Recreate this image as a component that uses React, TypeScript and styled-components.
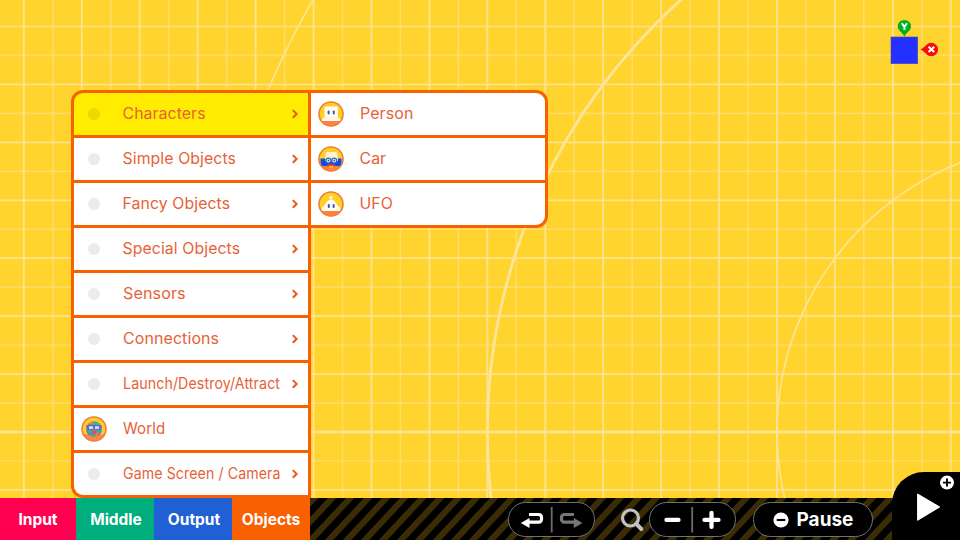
import React from "react";
import styled, { createGlobalStyle } from "styled-components";

const GlobalStyle = createGlobalStyle`
  * { box-sizing: border-box; }
  body { margin: 0; background: #ffd42e; }
`;

const ORANGE = "#f86000";

const Screen = styled.main`
  position: relative;
  width: 960px;
  height: 540px;
  overflow: hidden;
  display: flex;
  flex-direction: column;
  background: #ffd42e;
  font-family: Inter, "Liberation Sans", sans-serif;
`;

const Backdrop = styled.svg`
  position: absolute;
  inset: 0;
`;

const Stage = styled.section`
  position: relative;
  height: 498px;
  flex: none;
  display: flex;
  align-items: flex-start;
  padding: 90px 0 0 71px;
`;

const MenuColumn = styled.ul<{ $sub?: boolean }>`
  list-style: none;
  margin: 0;
  padding: ${(p) => (p.$sub ? "3px 3px 3px 0" : "3px")};
  width: ${(p) => (p.$sub ? 237 : 240)}px;
  display: flex;
  flex-direction: column;
  gap: 3px;
  background: ${ORANGE};
  border-radius: ${(p) => (p.$sub ? "0 12px 12px 0" : "12px 0 0 12px")};
`;

const MenuRow = styled.li<{ $active?: boolean; $sub?: boolean }>`
  height: 42px;
  display: grid;
  grid-template-columns: ${(p) => (p.$sub ? "39px minmax(0, 1fr)" : "39px minmax(0, 1fr) 26px")};
  align-items: center;
  background: ${(p) => (p.$active ? "#ffec00" : "#fff")};
  &:first-child { border-radius: ${(p) => (p.$sub ? "0 9px 0 0" : "9px 0 0 0")}; }
  &:last-child { border-radius: ${(p) => (p.$sub ? "0 0 9px 0" : "0 0 0 9px")}; }
`;

const IconSlot = styled.span`
  display: flex;
  justify-content: center;
`;

const Dot = styled.i<{ $active?: boolean }>`
  width: 12px;
  height: 12px;
  border-radius: 50%;
  background: ${(p) => (p.$active ? "#ebd900" : "#ebebeb")};
`;

const Label = styled.span<{ $squeeze?: number }>`
  margin-left: 9.5px;
  font-size: 15.8px;
  font-weight: 400;
  line-height: 20px;
  white-space: nowrap;
  color: #e66238;
  letter-spacing: 0.1px;
  transform: scaleX(${(p) => p.$squeeze ?? 1});
  transform-origin: left;
`;

const ChevronMark = styled.svg`
  margin-right: 1px;
`;

const Bar = styled.footer`
  position: relative;
  height: 42px;
  display: flex;
  background: #000;
`;

const Stripes = styled.svg`
  position: absolute;
  inset: 0 0 0 310px;
`;

const Tab = styled.button<{ $color: string; $w: number; $shift: number }>`
  flex: none;
  position: relative;
  width: ${(p) => p.$w}px;
  border: 0;
  padding: 0 0 0 ${(p) => p.$shift}px;
  background: ${(p) => p.$color};
  color: #fff;
  font: 700 15.5px/41px Inter, "Liberation Sans", sans-serif;
  text-align: center;
`;

const Controls = styled.div`
  position: relative;
  flex: 1;
  display: flex;
  align-items: flex-start;
  padding: 4px 0 0 198px;
`;

const Pill = styled.div<{ $w: number; $gap?: number }>`
  flex: none;
  width: ${(p) => p.$w}px;
  height: 35px;
  margin-left: ${(p) => p.$gap ?? 0}px;
  border: 1.5px solid #727272;
  border-radius: 18px;
  background: #000;
  display: flex;
  align-items: center;
  justify-content: center;
`;

const PauseLabel = styled.span`
  margin-left: 8px;
  color: #fff;
  font-size: 19px;
  font-weight: 700;
  line-height: 24px;
`;

const Lens = styled.svg`
  flex: none;
  margin: 3px 0 0 25px;
`;

const PlayCorner = styled.div`
  position: absolute;
  right: 0;
  bottom: 0;
  width: 68px;
  height: 68px;
  border-top-left-radius: 32px;
  background: #000;
`;

const AxisCube = styled.svg`
  position: absolute;
  left: 885px;
  top: 15px;
`;

const CX = 1066.6;
const CELL = 57.93;

function Grid() {
  const lines: React.ReactNode[] = [];
  for (let i = -1; i < 34; i++) {
    const major = i % 2 === 0;
    const x = 23.9 + (i * CELL) / 2;
    lines.push(
      <line key={`v${i}`} x1={x} x2={x} y1={0} y2={498} strokeWidth={major ? 1.9 : 1.6} opacity={major ? 0.85 : 0.55} />,
    );
  }
  for (let i = -1; i < 17; i++) {
    const major = i % 2 === 0;
    const y = 26.5 + (i * CELL) / 2;
    lines.push(
      <line
        key={`h${i}`}
        x1={0}
        x2={960}
        y1={y}
        y2={y}
        strokeWidth={i === 14 ? 3 : 1.7}
        opacity={major ? 0.85 : 0.5}
      />,
    );
  }
  return (
    <Backdrop width="960" height="540" stroke="#ffe49c" fill="none">
      {lines}
      <circle cx={CX} cy={432} r={289.6} strokeWidth={1.8} opacity={0.9} />
      <circle cx={CX} cy={432} r={579.2} strokeWidth={2.8} />
      <circle cx={CX} cy={432} r={868.8} strokeWidth={1.7} opacity={0.9} />
    </Backdrop>
  );
}

const Chevron = () => (
  <ChevronMark width="8" height="10" viewBox="0 0 8 10">
    <path d="M1.8 1.1 5.6 4.9 1.8 8.7" fill="none" stroke="#e8561a" strokeWidth="2" />
  </ChevronMark>
);

type Face = "person" | "car" | "ufo" | "world";

function Badge({ face }: { face: Face }) {
  return (
    <svg width="26" height="26" viewBox="0 0 26 26">
      <defs>
        <clipPath id={`clip-${face}`}>
          <circle cx="13" cy="13" r="11.8" />
        </clipPath>
      </defs>
      <circle cx="13" cy="13" r="12.3" fill="#ffcf24" />
      <g clipPath={`url(#clip-${face})`}>
        {face !== "world" && <rect y="20" width="26" height="6" fill="#ff8040" />}
        {face === "person" && (
          <>
            <path d="M7.3 5.5h11.7q.8 0 .8.8V17h1.2q1.5 0 1.5 1.5V20H4v-1.5Q4 17 5.5 17H6.5V6.3Q6.5 5.5 7.3 5.5Z" fill="#fffdf2" />
            <path d="M6.5 16.8H20" stroke="#ffe9ba" strokeWidth=".7" />
            <rect x="9.6" y="9.5" width="2" height="4" rx="1" fill="#4050cc" />
            <rect x="14.8" y="9.5" width="2" height="4" rx="1" fill="#4050cc" />
          </>
        )}
        {face === "car" && (
          <>
            <path d="M2.5 12.5h4l2 1h9l2-1h4v7.5H2.5Z" fill="#0d4be2" />
            <path d="M9.3 6h8.5q1.3 0 1.5 1.3l.7 7.7H7L7.8 7.3Q8 6 9.3 6Z" fill="#fff4cf" />
            <circle cx="10.4" cy="14.6" r="2.5" fill="#bfe7f5" stroke="#3d64bd" strokeWidth="1.1" />
            <circle cx="16.2" cy="14.6" r="2.5" fill="#bfe7f5" stroke="#3d64bd" strokeWidth="1.1" />
            <circle cx="10.4" cy="14.6" r=".8" fill="#2848a8" />
            <circle cx="16.2" cy="14.6" r=".8" fill="#2848a8" />
            <path d="M8.5 20.5q0-2.3 4.7-2.3t4.7 2.3Z" fill="#ff3b30" />
            <rect x="11" y="20" width="4.5" height="1.8" rx=".9" fill="#ffc400" />
          </>
        )}
        {face === "ufo" && (
          <>
            <circle cx="13" cy="6.5" r="1.7" fill="#fff7d8" />
            <path d="M13 8.5c4 0 4.8 4.500 7 6.200 1.500 1 2.500 2 2.500 3.800V20h-19v-1.500c0-1.800 1-2.800 2.500-3.800C8.200 13 9 8.500 13 8.500Z" fill="#fffdf2" />
            <rect x="9.8" y="13" width="2" height="4" rx="1" fill="#4050cc" />
            <rect x="14.6" y="13" width="2" height="4" rx="1" fill="#4050cc" />
          </>
        )}
        {face === "world" && (
          <>
            <path d="M2 18q3-1 6 1t10 0 6-1v8H2Z" fill="#ff8545" />
            <circle cx="13" cy="13.2" r="7.9" fill="#39b487" />
            <path d="M7 8q2-3 6-2.5L11 8Zm8 9 4-1-2 4-3 1Z" fill="#ff7b4b" />
            <path d="M5 9.5 9 9h8l4 .5-1.5 4.5h-5L13 12.5 11.5 14h-5Z" fill="#7b58cf" />
            <rect x="8" y="10.4" width="4" height="2.4" fill="#d9f0fa" />
            <rect x="14" y="10.4" width="4" height="2.4" fill="#d9f0fa" />
            <path d="M10.5 14.5h5v3l-2.5 1.5-2.5-1.5Z" fill="#dd4b7c" />
            <path d="M6 14.5q.5 3 3 4.5M20 14.5q-.5 3-3 4.5" stroke="#6a70d8" strokeWidth="1.5" fill="none" />
          </>
        )}
      </g>
      <circle cx="13" cy="13" r="12" fill="none" stroke="#ee7f3c" strokeWidth="1.6" />
    </svg>
  );
}

type Entry = { text: string; squeeze?: number; face?: Face };

const categories: Entry[] = [
  { text: "Characters" },
  { text: "Simple Objects" },
  { text: "Fancy Objects" },
  { text: "Special Objects" },
  { text: "Sensors", squeeze: 1.02 },
  { text: "Connections", squeeze: 1.01 },
  { text: "Launch/Destroy/Attract", squeeze: 0.9 },
  { text: "World", squeeze: 0.95, face: "world" },
  { text: "Game Screen / Camera", squeeze: 0.897 },
];

const characters: Entry[] = [
  { text: "Person", squeeze: 1.01, face: "person" },
  { text: "Car", face: "car" },
  { text: "UFO", face: "ufo" },
];

const tabs = [
  { text: "Input", color: "#ff0050", w: 76, shift: 0 },
  { text: "Middle", color: "#00ad7c", w: 78, shift: 2 },
  { text: "Output", color: "#2060d4", w: 78, shift: 2 },
  { text: "Objects", color: ORANGE, w: 78, shift: 0 },
];

export default function App() {
  return (
    <Screen>
      <GlobalStyle />
      <Grid />
      <Stage>
        <MenuColumn>
          {categories.map((c, i) => (
            <MenuRow key={c.text} $active={i === 0}>
              <IconSlot>{c.face ? <Badge face={c.face} /> : <Dot $active={i === 0} />}</IconSlot>
              <Label $squeeze={c.squeeze}>{c.text}</Label>
              {!c.face && (
                <IconSlot>
                  <Chevron />
                </IconSlot>
              )}
            </MenuRow>
          ))}
        </MenuColumn>
        <MenuColumn $sub>
          {characters.map((c) => (
            <MenuRow key={c.text} $sub>
              <IconSlot>{c.face && <Badge face={c.face} />}</IconSlot>
              <Label $squeeze={c.squeeze}>{c.text}</Label>
            </MenuRow>
          ))}
        </MenuColumn>
        <AxisCube width="60" height="55">
          <rect x="6" y="22" width="26.7" height="26.7" fill="#2430ff" stroke="#4a48bd" strokeWidth=".6" />
          <path d="M19.4 22 C18 17.5 12.7 16 12.7 11.6A6.7 6.7 0 0 1 26.1 11.6C26.1 16 20.8 17.5 19.4 22Z" fill="#00b020" />
          <path d="M35.3 34.5 C40 33 41.5 27.7 46.3 27.7A6.8 6.8 0 0 1 46.3 41.3C41.5 41.3 40 36 35.3 34.5Z" fill="#f80d0d" />
          <path d="M16.8 8.2 19.4 11.8 22 8.2M19.4 11.5V15" fill="none" stroke="#fff" strokeWidth="1.9" />
          <path d="M43.6 31.8 49.2 37M49.2 31.8 43.6 37" stroke="#fff" strokeWidth="2" />
        </AxisCube>
      </Stage>
      <Bar>
        <Stripes width="650" height="42">
          <defs>
            <pattern id="hazard" width="18" height="42" patternUnits="userSpaceOnUse" patternTransform="skewX(-43)">
              <rect width="8.4" height="42" fill="#3b2c05" />
            </pattern>
          </defs>
          <rect width="650" height="42" fill="url(#hazard)" />
        </Stripes>
        {tabs.map((t) => (
          <Tab key={t.text} $color={t.color} $w={t.w} $shift={t.shift}>{t.text}</Tab>
        ))}
        <Controls>
          <Pill $w={87}>
            <svg width="84" height="32" viewBox="510 504 84 32">
              <path d="M529 514.5h9.5a2.8 2.8 0 0 1 3 2.8v2a2.8 2.8 0 0 1-3 2.9H528" fill="none" stroke="#fff" strokeWidth="3.2" />
              <path d="M520.8 523 529.5 518V528Z" fill="#fff" />
              <path d="M551.7 507V532.5" stroke="#6d6d6d" strokeWidth="1.8" />
              <path d="M574 514.5h-9.5a2.8 2.8 0 0 0-3 2.8v2a2.8 2.8 0 0 0 3 2.9H575" fill="none" stroke="#777" strokeWidth="3.2" />
              <path d="M582.5 523 573.8 518V528Z" fill="#777" />
            </svg>
          </Pill>
          <Lens width="26" height="28" viewBox="620 505 26 28">
            <circle cx="630.5" cy="518" r="8" fill="none" stroke="#c2c2c2" strokeWidth="3.2" />
            <path d="M636.3 523.8 641.3 529" stroke="#c2c2c2" strokeWidth="4" strokeLinecap="round" />
          </Lens>
          <Pill $w={87} $gap={3}>
            <svg width="84" height="32" viewBox="651 504 84 32">
              <path d="M666.5 519.9H678.5" stroke="#fff" strokeWidth="4.3" strokeLinecap="round" />
              <path d="M692.2 507V532.5" stroke="#6d6d6d" strokeWidth="1.8" />
              <path d="M704.5 519.9H718.5M711.5 512.9V526.9" stroke="#fff" strokeWidth="4.3" strokeLinecap="round" />
            </svg>
          </Pill>
          <Pill $w={120} $gap={17}>
            <svg width="16" height="16" viewBox="0 0 16 16">
              <circle cx="8" cy="8" r="7.6" fill="#fff" />
              <path d="M3.7 8H12.3" stroke="#000" strokeWidth="2.1" />
            </svg>
            <PauseLabel>Pause</PauseLabel>
          </Pill>
        </Controls>
        <PlayCorner>
          <svg width="68" height="68" viewBox="892 472 68 68">
            <path d="M917.6 494 939.7 507 917.6 520.3Z" fill="#fff" stroke="#fff" strokeLinejoin="round" />
            <circle cx="947" cy="482.6" r="7" fill="#fff" />
            <path d="M943 482.6H951M947 478.6V486.6" stroke="#000" strokeWidth="1.9" />
          </svg>
        </PlayCorner>
      </Bar>
    </Screen>
  );
}
